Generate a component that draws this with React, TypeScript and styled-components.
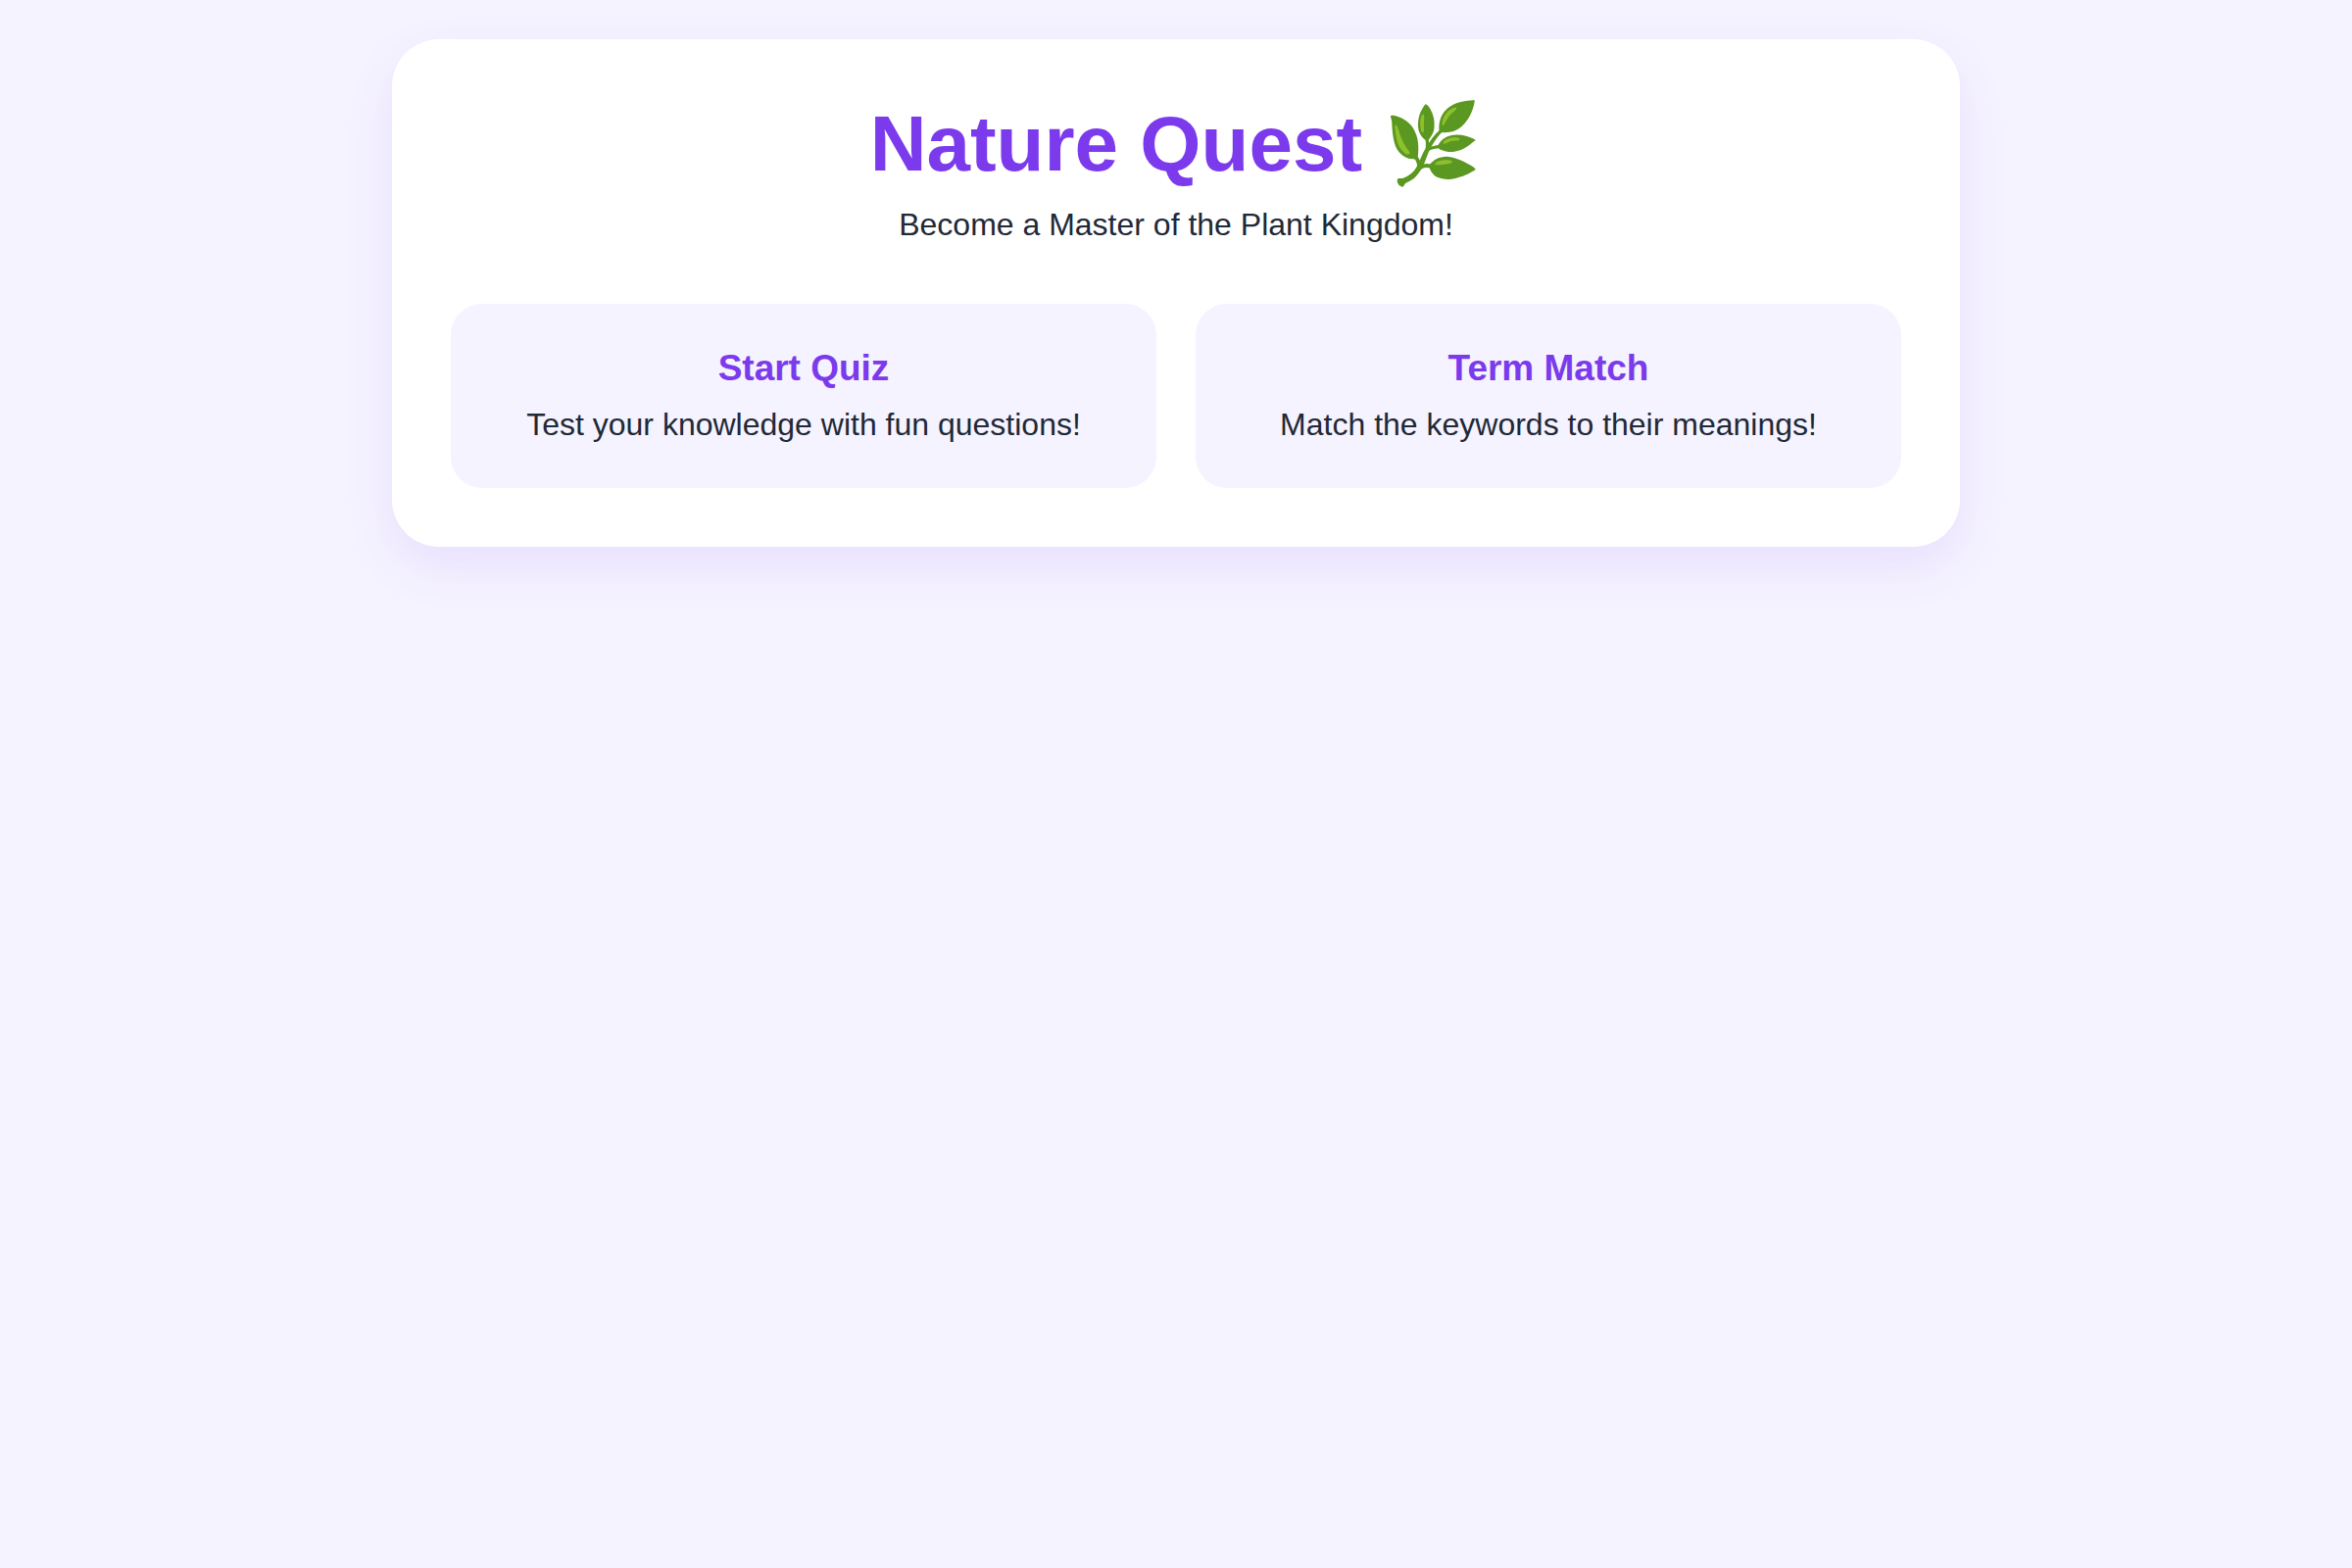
import styled, { createGlobalStyle } from 'styled-components';

const GlobalStyle = createGlobalStyle`
  * {
    box-sizing: border-box;
  }

  body {
    min-height: 100vh;
    margin: 0;
    padding: 40px;
    background: #f5f3ff;
    color: #1f2937;
    font-family: 'Liberation Sans', Arial, sans-serif;
    font-size: 32px;
    line-height: 46px;
  }
`;

const Panel = styled.main`
  max-width: 1600px;
  margin: 0 auto;
  padding: 60px;
  background: #ffffff;
  border-radius: 48px;
  box-shadow: 0 20px 50px rgba(124, 58, 237, 0.1);
  text-align: center;
`;

const Title = styled.h1`
  margin: 0 0 12px;
  color: #7c3aed;
  font-size: 80px;
  line-height: 94px;
`;

const Subtitle = styled.p`
  margin: 0;
`;

const Menu = styled.nav`
  display: grid;
  grid-template-columns: repeat(auto-fit, minmax(min(500px, 100%), 1fr));
  gap: 40px;
  margin-top: 58px;
`;

const MenuCard = styled.button`
  display: flex;
  flex-direction: column;
  align-items: center;
  gap: 10px;
  padding: 42px 40px;
  border: 0;
  border-radius: 32px;
  background: #f5f3ff;
  color: inherit;
  font: inherit;
  cursor: pointer;
`;

const CardTitle = styled.span`
  color: #7c3aed;
  font-size: 37px;
  font-weight: 700;
  line-height: 48px;
`;

const CardText = styled.span`
  color: #1f2937;
`;

const activities = [
  { title: 'Start Quiz', text: 'Test your knowledge with fun questions!' },
  { title: 'Term Match', text: 'Match the keywords to their meanings!' },
];

export default function App() {
  return (
    <>
      <GlobalStyle />
      <Panel>
        <Title>Nature Quest 🌿</Title>
        <Subtitle>Become a Master of the Plant Kingdom!</Subtitle>
        <Menu>
          {activities.map(({ title, text }) => (
            <MenuCard key={title} type="button">
              <CardTitle>{title}</CardTitle>
              <CardText>{text}</CardText>
            </MenuCard>
          ))}
        </Menu>
      </Panel>
    </>
  );
}
